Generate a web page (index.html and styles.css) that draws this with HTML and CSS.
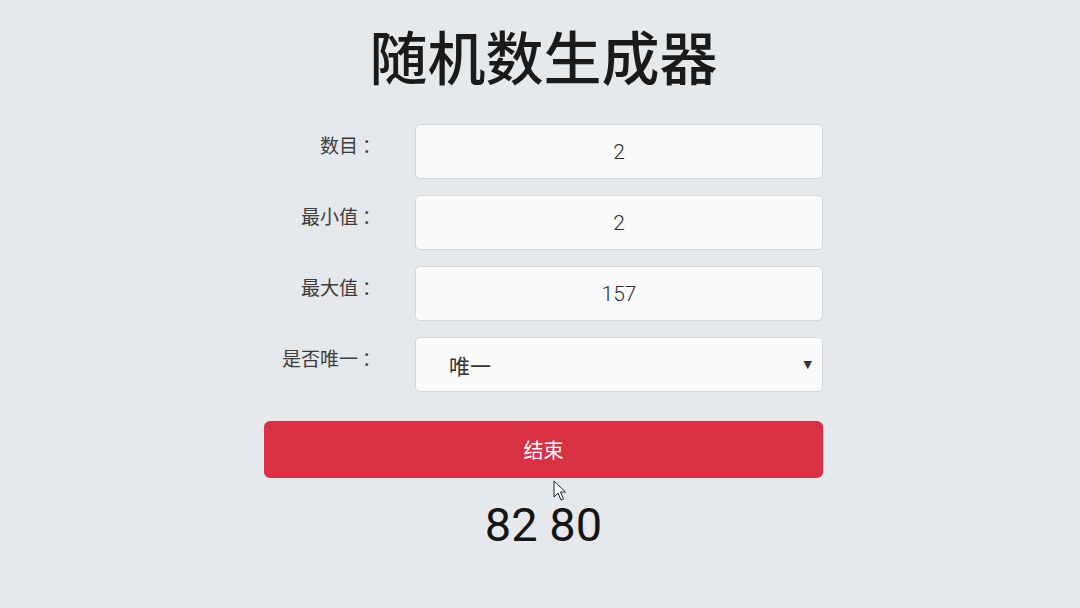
FILE: index.html
```html
<!DOCTYPE html>
<html lang="zh-CN">
<head>
<meta charset="utf-8">
<title>随机数生成器</title>
<link rel="stylesheet" href="styles.css">
</head>
<body>
<main class="app">
  <h1 class="title">随机数生成器</h1>
  <form class="form">
    <div class="row">
      <label class="label">数目<span class="colon">：</span></label>
      <div class="field">2</div>
    </div>
    <div class="row">
      <label class="label">最小值<span class="colon">：</span></label>
      <div class="field">2</div>
    </div>
    <div class="row">
      <label class="label">最大值<span class="colon">：</span></label>
      <div class="field">157</div>
    </div>
    <div class="row">
      <label class="label">是否唯一<span class="colon">：</span></label>
      <div class="field select"><span>唯一</span><span class="caret">▼</span></div>
    </div>
    <button type="button" class="btn">结束</button>
  </form>
  <div class="result">82 80</div>
</main>
<svg class="cursor" width="14" height="22" viewBox="0 0 14 22"><path d="M1 1 L1 17 L5 13 L8 20 L10.5 19 L7.5 12 L12.5 12 Z" fill="#fff" stroke="#222" stroke-width="1" stroke-linejoin="round"/></svg>
</body>
</html>
```
FILE: styles.css
```css
html, body {
  margin: 0;
  padding: 0;
}
body {
  background: #e5e9eb;
  font-family: "Noto Sans CJK SC", "Noto Sans", sans-serif;
  color: #222;
  width: 1080px;
  height: 608px;
  overflow: hidden;
  position: relative;
}
.app {
  width: 559px;
  margin: 0 0 0 264px;
  padding-top: 21px;
  display: flex;
  flex-direction: column;
}
.title {
  margin: 0;
  font-size: 58px;
  font-weight: 500;
  line-height: 68px;
  text-align: center;
  color: #1a1a1a;
}
.form {
  margin-top: 35px;
  display: flex;
  flex-direction: column;
  gap: 16px;
}
.row {
  display: flex;
  align-items: flex-start;
}
.label {
  width: 151px;
  box-sizing: border-box;
  padding-right: 38px;
  padding-top: 9px;
  text-align: right;
  font-size: 19px;
  line-height: 24px;
  color: #3c3c3c;
}
.colon {
  margin-left: 4px;
  margin-right: -4px;
}
.field {
  flex: 1;
  height: 55px;
  box-sizing: border-box;
  background: #fafafa;
  border: 1px solid #d3d7da;
  border-radius: 5px;
  display: flex;
  align-items: center;
  justify-content: center;
  font-family: Roboto, "Noto Sans CJK SC", sans-serif;
  font-weight: 300;
  font-size: 21px;
  color: #2e2e2e;
}
.select {
  justify-content: space-between;
  padding: 0 10px 0 33px;
  font-family: "Noto Sans CJK SC", sans-serif;
  font-weight: 400;
  font-size: 21px;
  color: #333;
}
.caret {
  font-size: 11px;
  color: #333;
  font-family: "DejaVu Sans", sans-serif;
}
.btn {
  margin-top: 13px;
  height: 57px;
  border: none;
  border-radius: 6px;
  background: #d93144;
  color: #fff;
  font-family: "Noto Sans CJK SC", sans-serif;
  font-size: 20px;
  padding: 0;
}
.result {
  margin-top: 20px;
  text-align: center;
  font-family: Roboto, sans-serif;
  font-size: 47px;
  line-height: 54px;
  color: #151515;
}
.cursor {
  position: absolute;
  left: 553px;
  top: 480px;
}
```
